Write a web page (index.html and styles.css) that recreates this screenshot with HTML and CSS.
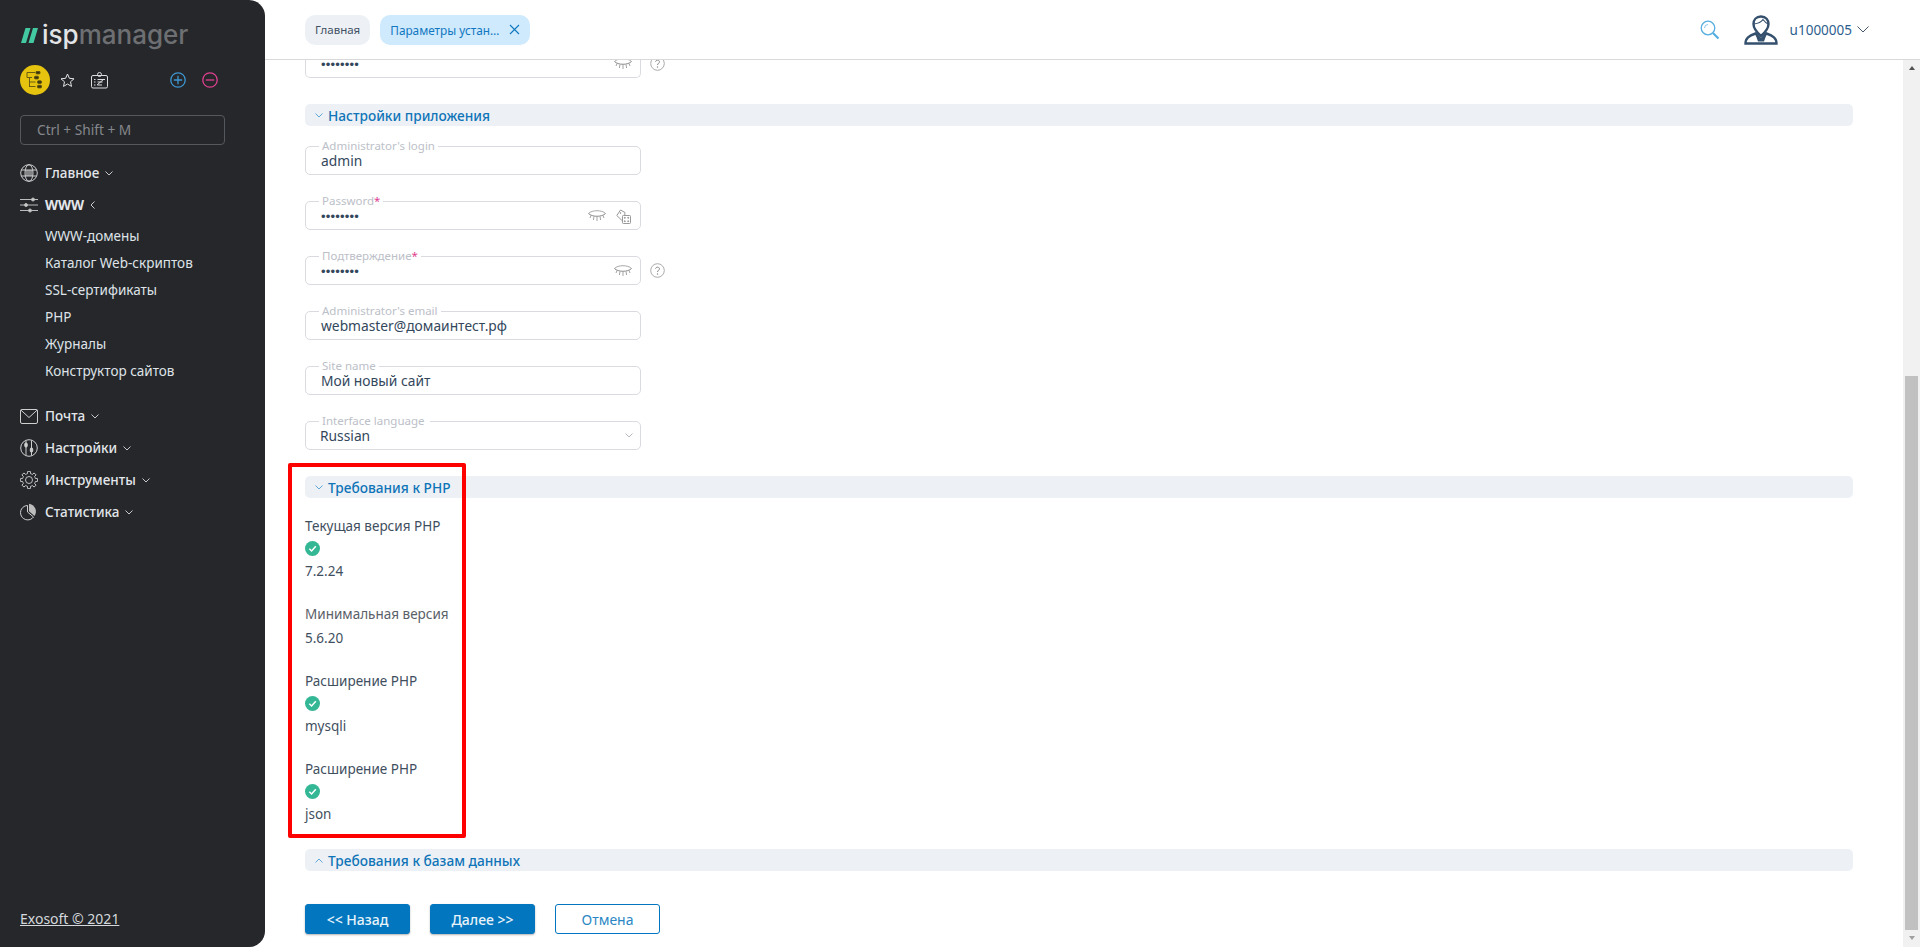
FILE: index.html
```html
<!DOCTYPE html>
<html lang="ru">
<head>
<meta charset="utf-8">
<title>ispmanager</title>
<link rel="stylesheet" href="styles.css">
</head>
<body>
<svg class="defs" width="0" height="0" aria-hidden="true">
  <symbol id="eye" viewBox="0 0 18 14">
    <path d="M.5 4.500C4 .8 14 .8 17.500 4.500" fill="none" stroke="#a8a8a8"/>
    <path d="M.5 4.500C4 8.200 14 8.200 17.500 4.500" fill="none" stroke="#8a8a8a"/>
    <path d="M3 6.500 2 9M6 7.400 5.400 11M9 7.700V12M12 7.400 12.600 11M15 6.500 16 9" fill="none" stroke="#999" stroke-width=".9"/>
  </symbol>
  <symbol id="help" viewBox="0 0 15 15">
    <circle cx="7.500" cy="7.500" r="6.800" fill="none" stroke="#aaa"/>
    <path d="M5.600 5.800C5.700 3.600 9.600 3.700 9.500 5.900 9.400 7.300 7.500 7.300 7.500 9" fill="none" stroke="#888"/>
    <circle cx="7.500" cy="11" r=".7" fill="#888"/>
  </symbol>
  <symbol id="ok" viewBox="0 0 15 15">
    <circle cx="7.500" cy="7.500" r="7.500" fill="#33b795"/>
    <path d="M4.300 7.800 6.600 10 10.800 5.300" fill="none" stroke="#fff" stroke-width="1.500"/>
  </symbol>
  <symbol id="down" viewBox="0 0 8 5">
    <path d="M.5.500 4 4 7.500.500" fill="none" stroke="currentColor"/>
  </symbol>
</svg>

<div class="app">
  <aside class="sidebar">
    <div class="logo">
      <svg class="logo-mark" width="17" height="15" viewBox="0 0 17 15"><path d="M4.500 0h5L5 15H0zM12 0h5l-4.500 15h-5z" fill="#43c9a2"/></svg>
      <span class="logo-isp">isp</span><span class="logo-manager">manager</span>
    </div>
    <div class="tools">
      <span class="tree-btn">
        <svg width="18" height="18" viewBox="0 0 18 18" fill="none" stroke="#5c5212" stroke-width=".9"><path d="M1 1.500h8M1 1.500v5h5M3.500 6.500v9.500M3.500 11h6M3.500 15.500h6"/><rect x="10" y=".3" width="4" height="2.600" rx=".8" fill="#3a350e"/><rect x="8.500" y="5.300" width="4" height="2.600" rx=".8" fill="#3a350e"/><rect x="11.500" y="9.800" width="4" height="2.600" rx=".8" fill="#3a350e"/><rect x="11.500" y="14.300" width="4" height="2.600" rx=".8" fill="#3a350e"/></svg>
      </span>
      <svg class="tool-star" width="15" height="15" viewBox="0 0 15 15"><path d="M7.500 1l1.900 4.300 4.600.5-3.500 3 1 4.600-4-2.400-4 2.400 1-4.600-3.500-3 4.600-.5z" fill="none" stroke="#e6e6e6"/></svg>
      <svg class="tool-card" width="17" height="17" viewBox="0 0 17 17" fill="none" stroke="#ddd"><rect x=".5" y="3.500" width="16" height="12.500" rx="1.500"/><circle cx="8.500" cy="2.500" r="2"/><path d="M3 7.500h1.500M6.500 7.500H14M3 10h1.500M6.500 10h5M3 13h1.500M6.500 13H11M6 13 13 7"/></svg>
      <span class="tools-gap"></span>
      <svg class="tool-plus" width="16" height="16" viewBox="0 0 16 16" fill="none" stroke="#3d97d3" stroke-width="1.300"><circle cx="8" cy="8" r="7.200"/><path d="M3.800 8h8.400M8 3.800v8.400"/></svg>
      <svg class="tool-minus" width="16" height="16" viewBox="0 0 16 16" fill="none" stroke="#e0408f" stroke-width="1.300"><circle cx="8" cy="8" r="7.200"/><path d="M3.800 8h8.400"/></svg>
    </div>
    <div class="quick">Ctrl + Shift + M</div>
    <nav class="menu">
      <div class="menu-item">
        <svg class="menu-icon" width="18" height="18" viewBox="0 0 18 18" fill="none" stroke="#cfcfcf"><circle cx="9" cy="9" r="8.300"/><ellipse cx="9" cy="9" rx="4" ry="8.300"/><path d="M1.300 6h15.400M1.300 12h15.400"/><rect x="5.800" y="6" width="6.400" height="6" fill="#cfcfcf" stroke="none" opacity=".55"/></svg>
        <span>Главное</span><svg class="chev" width="8" height="5"><use href="#down"/></svg>
      </div>
      <div class="menu-item menu-open">
        <svg class="menu-icon" width="18" height="16" viewBox="0 0 18 16" fill="none" stroke="#bbb"><path d="M0 2.500h18M0 8h18M0 13.500h18"/><circle cx="13" cy="2.500" r="1.500" fill="#ccc"/><circle cx="6" cy="8" r="1.500" fill="#ccc"/><circle cx="10" cy="13.500" r="1.500" fill="#ccc"/></svg>
        <span>WWW</span><svg class="chev-left" width="5" height="8" viewBox="0 0 5 8"><path d="M4.500.500 1 4l3.500 3.500" fill="none" stroke="#ccc"/></svg>
      </div>
      <div class="submenu">
        <a class="sub-item">WWW-домены</a>
        <a class="sub-item">Каталог Web-скриптов</a>
        <a class="sub-item">SSL-сертификаты</a>
        <a class="sub-item">PHP</a>
        <a class="sub-item">Журналы</a>
        <a class="sub-item">Конструктор сайтов</a>
      </div>
      <div class="menu-item">
        <svg class="menu-icon" width="18" height="15" viewBox="0 0 18 15" fill="none" stroke="#cfcfcf"><rect x=".5" y=".5" width="17" height="14" rx="1.500"/><path d="M.8 1 9 8.500 17.200 1"/></svg>
        <span>Почта</span><svg class="chev" width="8" height="5"><use href="#down"/></svg>
      </div>
      <div class="menu-item">
        <svg class="menu-icon" width="18" height="18" viewBox="0 0 18 18" fill="none" stroke="#cfcfcf"><circle cx="9" cy="9" r="8.300"/><path d="M6 1.500v15M11.500 1.500v15"/><rect x="4.800" y="4" width="2.400" height="4" rx="1" fill="#ccc"/><rect x="10.300" y="9" width="2.400" height="4" rx="1" fill="#ccc"/></svg>
        <span>Настройки</span><svg class="chev" width="8" height="5"><use href="#down"/></svg>
      </div>
      <div class="menu-item">
        <svg class="menu-icon" width="18" height="18" viewBox="-9 -9 18 18" fill="none" stroke="#cfcfcf" stroke-width=".9"><g id="gear-teeth"><path id="gear-tooth" d="M-2.490-6-1.570-6.310-1.360-8.590H1.360L1.570-6.310 2.490-6"/><use href="#gear-tooth" transform="rotate(45)"/><use href="#gear-tooth" transform="rotate(90)"/><use href="#gear-tooth" transform="rotate(135)"/><use href="#gear-tooth" transform="rotate(180)"/><use href="#gear-tooth" transform="rotate(225)"/><use href="#gear-tooth" transform="rotate(270)"/><use href="#gear-tooth" transform="rotate(315)"/></g><circle r="3.500"/></svg>
        <span>Инструменты</span><svg class="chev" width="8" height="5"><use href="#down"/></svg>
      </div>
      <div class="menu-item">
        <svg class="menu-icon" width="18" height="18" viewBox="0 0 18 18" fill="none" stroke="#cfcfcf"><path d="M7.500 2.500a7.200 7.200 0 1 0 6 11.500L7.500 9z"/><path d="M9 .8a7.800 7.800 0 0 1 5.500 12.200L9 8.300z" fill="#bdbdbd" stroke="none"/></svg>
        <span>Статистика</span><svg class="chev" width="8" height="5"><use href="#down"/></svg>
      </div>
    </nav>
    <a class="copyright">Exosoft © 2021</a>
  </aside>

  <div class="main">
    <header class="topbar">
      <span class="tab">Главная</span>
      <span class="tab tab-active">Параметры устан…
        <svg class="tab-close" width="11" height="11" viewBox="0 0 11 11"><path d="M1 1l9 9M10 1l-9 9" stroke="#1078c0" stroke-width="1.100" fill="none"/></svg>
      </span>
      <span class="topbar-gap"></span>
      <svg class="search" width="20" height="20" viewBox="0 0 20 20" fill="none"><circle cx="8" cy="8" r="6.800" stroke="#55aee0" stroke-width="1.300"/><path d="M4.500 8A3.500 3.500 0 0 1 8 4.500" stroke="#8cc9ea"/><path d="M13 13l5.500 5.500" stroke="#55aee0" stroke-width="2.200"/></svg>
      <svg class="avatar" width="34" height="30" viewBox="0 0 34 30">
        <path d="M1.500 28.500C1.500 23 5 20.800 11.500 18.500L17 24.500 22.500 18.500C29 20.800 32.500 23 32.500 28.500z" fill="#fff" stroke="#34506d" stroke-width="2.400"/>
        <path d="M11.500 19.500 17 25.500 22.500 19.500 20 26.500H14z" fill="#34506d"/>
        <path d="M17 1.500c-5 0-7.500 3.500-7.500 7.500 0 4.500 3.500 8.500 7.500 12 4-3.500 7.500-7.500 7.500-12 0-4-2.500-7.500-7.500-7.500z" fill="#fff" stroke="#34506d" stroke-width="2.400"/>
        <path d="M10 9c4-.5 7-1.500 9-4.500 1.500 2 3 3.500 5 4.500" fill="none" stroke="#34506d" stroke-width="1.100"/>
      </svg>
      <span class="username">u1000005</span>
      <svg class="user-chev" width="12" height="7" viewBox="0 0 12 7"><path d="M.5.500 6 6 11.500.500" fill="none" stroke="#44576b"/></svg>
    </header>

    <div class="body-row">
      <div class="content">
        <div class="form">
          <div class="field field-cut">
            <span class="value dots">••••••••</span>
            <svg class="f-icon f-eye" width="18" height="14"><use href="#eye"/></svg>
            <svg class="f-help" width="15" height="15"><use href="#help"/></svg>
          </div>

          <div class="section"><svg class="sec-chev" width="8" height="5"><use href="#down"/></svg>Настройки приложения</div>
          <div class="section-body">
            <div class="field"><label class="f-label">Administrator's login</label><span class="value">admin</span></div>
            <div class="field"><label class="f-label">Password<b>*</b></label><span class="value dots">••••••••</span>
              <svg class="f-icon f-eye f-eye-left" width="18" height="14"><use href="#eye"/></svg>
              <svg class="f-icon f-dice" width="15" height="15" viewBox="0 0 15 15" fill="none" stroke="#999"><rect x="6.500" y="6.500" width="8" height="8" rx=".8"/><path d="M6 11.500.8 6.500 4.500 1 9 3.500 8.700 6.300"/><circle cx="8.800" cy="8.800" r=".5" fill="#666"/><circle cx="12.200" cy="8.800" r=".5" fill="#666"/><circle cx="8.800" cy="12.200" r=".5" fill="#666"/><circle cx="12.200" cy="12.200" r=".5" fill="#666"/><circle cx="4.500" cy="4" r=".4" fill="#888"/></svg>
            </div>
            <div class="field"><label class="f-label">Подтверждение<b>*</b></label><span class="value dots">••••••••</span>
              <svg class="f-icon f-eye" width="18" height="14"><use href="#eye"/></svg>
              <svg class="f-help" width="15" height="15"><use href="#help"/></svg>
            </div>
            <div class="field"><label class="f-label">Administrator's email</label><span class="value">webmaster@домаинтест.рф</span></div>
            <div class="field"><label class="f-label">Site name</label><span class="value">Мой новый сайт</span></div>
            <div class="field field-select"><label class="f-label">Interface language</label><span class="value">Russian</span>
              <svg class="f-icon f-select" width="8" height="5"><use href="#down"/></svg>
            </div>
          </div>

          <div class="req">
            <div class="section"><svg class="sec-chev" width="8" height="5"><use href="#down"/></svg>Требования к PHP</div>
            <div class="req-list">
              <div class="req-group"><div class="req-row">Текущая версия PHP</div><div class="req-icon"><svg width="15" height="15"><use href="#ok"/></svg></div><div class="req-row">7.2.24</div></div>
              <div class="req-group"><div class="req-row req-muted">Минимальная версия</div><div class="req-row req-next">5.6.20</div></div>
              <div class="req-group"><div class="req-row">Расширение PHP</div><div class="req-icon"><svg width="15" height="15"><use href="#ok"/></svg></div><div class="req-row">mysqli</div></div>
              <div class="req-group"><div class="req-row">Расширение PHP</div><div class="req-icon"><svg width="15" height="15"><use href="#ok"/></svg></div><div class="req-row">json</div></div>
            </div>
            <div class="highlight"></div>
          </div>

          <div class="section"><svg class="sec-chev sec-chev-up" width="8" height="5"><use href="#down"/></svg>Требования к базам данных</div>

          <div class="actions">
            <button class="btn btn-primary">&lt;&lt; Назад</button>
            <button class="btn btn-primary">Далее &gt;&gt;</button>
            <button class="btn btn-outline">Отмена</button>
          </div>
        </div>
      </div>
      <div class="scrollbar">
        <span class="arrow-up"></span>
        <span class="thumb"></span>
        <span class="arrow-down"></span>
      </div>
    </div>
  </div>
</div>
</body>
</html>
```

FILE: styles.css
```css
* { box-sizing: border-box; }
html, body { margin: 0; height: 100%; }
body {
  background: #fff;
  font-family: "Noto Sans", "Open Sans", sans-serif;
  font-size: 13px;
  color: #3a4a5c;
  overflow: hidden;
}
.defs { position: absolute; }
.app { display: flex; height: 947px; }

/* sidebar */
.sidebar {
  width: 265px;
  flex: none;
  display: flex;
  flex-direction: column;
  background: #25272b;
  border-radius: 0 16px 16px 0;
  padding: 25px 20px 20px;
  color: #dfe3e8;
}
.logo { display: flex; align-items: center; height: 20px; font-family: "Inter", "Noto Sans", sans-serif; font-size: 26px; font-weight: 500; line-height: 20px; }
.logo-mark { margin: 0 4px 0 1px; }
.logo-isp { color: #e3e4e6; }
.logo-manager { color: #6d6f72; }
.tools { display: flex; align-items: center; height: 30px; margin-top: 20px; }
.tree-btn { width: 30px; height: 30px; border-radius: 50%; background: #e6c30e; display: flex; align-items: center; justify-content: center; }
.tool-star { margin-left: 10px; }
.tool-card { margin-left: 16px; }
.tools-gap { flex: 1; }
.tool-minus { margin-left: 16px; margin-right: 27px; }
.quick { height: 30px; width: 205px; margin-top: 20px; border: 1px solid #55585c; border-radius: 4px; padding-left: 16px; font-size: 13.700px; line-height: 28px; color: #85888c; }
.menu { margin-top: 12px; }
.menu-item { display: flex; align-items: center; height: 32px; font-size: 13.500px; font-weight: 500; color: #e3e6ea; }
.menu-icon { width: 18px; margin-right: 7px; flex: none; }
.chev { margin-left: 6px; color: #c8c8c8; }
.chev-left { margin-left: 6px; }
.menu-open { font-weight: 700; }
.submenu { padding-top: 2px; padding-bottom: 15px; }
.sub-item { display: block; height: 27px; line-height: 27px; margin-left: 25px; font-size: 13.500px; font-weight: 400; color: #dfe3e8; }
.copyright { margin-top: auto; font-size: 14px; line-height: 16px; color: #d5d8dc; text-decoration: underline; }

/* main */
.main { flex: 1; min-width: 0; display: flex; flex-direction: column; }
.topbar { flex: none; display: flex; align-items: center; height: 60px; padding: 0 51px 0 40px; border-bottom: 1px solid #d9d9d9; }
.tab { display: flex; align-items: center; height: 30px; padding: 0 10px; border-radius: 10px; background: #edf1f5; font-size: 11.500px; color: #3f5064; margin-right: 10px; }
.tab-active { background: #cfe9fd; color: #1078c0; font-size: 11.800px; }
.tab-close { margin-left: 10px; }
.topbar-gap { flex: 1; }
.avatar { margin-left: 24px; }
.username { margin-left: 12px; font-size: 13.500px; color: #2e5f8e; }
.user-chev { margin-left: 5px; }

.body-row { flex: 1; min-height: 0; display: flex; }
.content { flex: 1; min-width: 0; overflow: hidden; padding: 0 50px 0 40px; }
.form { margin-top: -11px; }

.field { position: relative; width: 336px; height: 29px; border: 1px solid #d9dbe0; border-radius: 5px; margin-bottom: 26px; padding-left: 15px; display: flex; align-items: center; }
.field-cut { border-top-color: transparent; }
.section-body .field:first-child { margin-top: 20px; }
.f-label { position: absolute; left: 13px; top: -7px; padding: 0 3px; background: #fff; font-size: 11.500px; line-height: 12px; color: #bcc0c8; }
.f-label b { font-weight: 400; color: #e0408f; }
.value { font-size: 13.800px; color: #33475c; }
.dots { font-family: "Liberation Sans", sans-serif; font-size: 13px; line-height: 8px; letter-spacing: .2px; color: #33475c; margin-top: 2px; }
.f-icon { position: absolute; top: 7px; }
.f-eye { right: 8px; }
.f-eye-left { right: 34px; }
.f-dice { right: 9px; top: 7px; }
.f-help { position: absolute; right: -25px; top: 6px; }
.field-select { padding-left: 14px; }
.field-select .f-label { left: 13px; padding-right: 5px; }
.f-select { right: 7px; top: 11px; color: #b4b8be; }

.section { display: flex; align-items: center; height: 22px; padding-left: 10px; border-radius: 5px; background: #edf1f5; font-size: 13.700px; font-weight: 500; color: #0f74b8; }
.sec-chev { margin-right: 5px; color: #5ea9d8; }
.sec-chev-up { transform: rotate(180deg); }

.req { position: relative; }
.req-list { padding-top: 17px; padding-bottom: 3px; }
.req-group { margin-bottom: 21px; }
.req-row { height: 22px; line-height: 22px; font-size: 13.500px; color: #3f4f60; }
.req-muted { color: #5a6068; }
.req-next { margin-top: 2px; }
.req-icon { height: 23px; display: flex; align-items: center; }
.highlight { position: absolute; left: -17px; top: -13px; width: 178px; height: 375px; border: 4px solid #f00; border-radius: 2px; pointer-events: none; }

.actions { display: flex; gap: 20px; margin-top: 33px; }
.btn { width: 105px; height: 30px; border-radius: 3px; font-family: inherit; font-size: 14px; font-weight: 500; padding: 0; }
.btn-primary { background: #0277bf; border: 1px solid #0277bf; color: #e9f3fa; box-shadow: 0 1px 2px rgba(0,0,0,.3); }
.btn-outline { background: #fff; border: 1px solid #0277bf; color: #2b87c4; font-weight: 400; }

/* scrollbar */
.scrollbar { position: relative; flex: none; width: 17px; background: #f1f1f1; display: flex; flex-direction: column; align-items: center; }
.arrow-up { margin-top: 6px; border: 3.500px solid transparent; border-top: 0; border-bottom: 4px solid #505050; }
.thumb { width: 13px; height: 554px; margin-top: 306px; background: #c1c1c1; }
.arrow-down { margin-top: 6px; border: 3.500px solid transparent; border-bottom: 0; border-top: 4px solid #a0a0a0; }
```
